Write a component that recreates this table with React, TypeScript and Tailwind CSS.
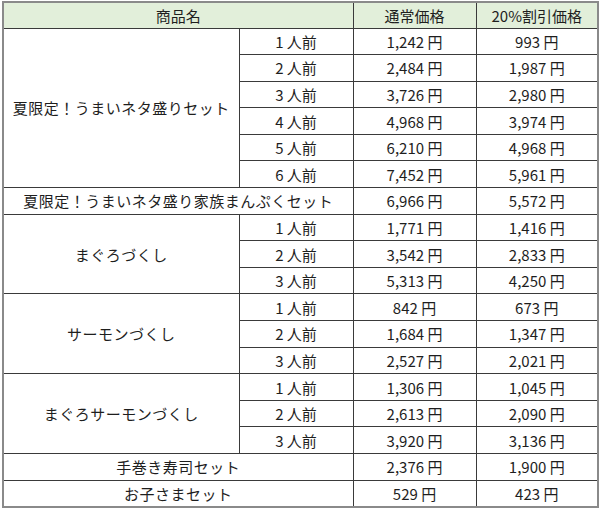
import React from 'react';

interface Row {
  name?: string;
  span?: number;
  size?: string;
  regular: string;
  discount: string;
}

const rows: Row[] = [
  { name: '夏限定！うまいネタ盛りセット', span: 6, size: '1 人前', regular: '1,242', discount: '993' },
  { size: '2 人前', regular: '2,484', discount: '1,987' },
  { size: '3 人前', regular: '3,726', discount: '2,980' },
  { size: '4 人前', regular: '4,968', discount: '3,974' },
  { size: '5 人前', regular: '6,210', discount: '4,968' },
  { size: '6 人前', regular: '7,452', discount: '5,961' },
  { name: '夏限定！うまいネタ盛り家族まんぷくセット', regular: '6,966', discount: '5,572' },
  { name: 'まぐろづくし', span: 3, size: '1 人前', regular: '1,771', discount: '1,416' },
  { size: '2 人前', regular: '3,542', discount: '2,833' },
  { size: '3 人前', regular: '5,313', discount: '4,250' },
  { name: 'サーモンづくし', span: 3, size: '1 人前', regular: '842', discount: '673' },
  { size: '2 人前', regular: '1,684', discount: '1,347' },
  { size: '3 人前', regular: '2,527', discount: '2,021' },
  { name: 'まぐろサーモンづくし', span: 3, size: '1 人前', regular: '1,306', discount: '1,045' },
  { size: '2 人前', regular: '2,613', discount: '2,090' },
  { size: '3 人前', regular: '3,920', discount: '3,136' },
  { name: '手巻き寿司セット', regular: '2,376', discount: '1,900' },
  { name: 'お子さまセット', regular: '529', discount: '423' },
];

const cell = 'border border-[#3a3a3a] text-center align-middle p-0';

export default function App() {
  return (
    <div
      className="bg-white w-[600px] h-[513px] pl-[2px] pt-[1px] text-[#1e1e1e] text-[15px] leading-none"
      style={{ fontFamily: '"Noto Sans CJK JP", "Noto Sans", sans-serif' }}
    >
      <table className="w-[595px] table-fixed border-collapse border-2 border-[#8a8a8a]">
        <colgroup>
          <col className="w-[236px]" />
          <col className="w-[114px]" />
          <col className="w-[123px]" />
          <col className="w-[122px]" />
        </colgroup>
        <thead>
          <tr className="h-[26px] bg-[#e2efda]">
            <th colSpan={2} className={`${cell} font-normal`}>商品名</th>
            <th className={`${cell} font-normal`}>通常価格</th>
            <th className={`${cell} font-normal`}>20%割引価格</th>
          </tr>
        </thead>
        <tbody>
          {rows.map((r, i) => (
            <tr key={i} className="h-[26.6px]">
              {r.name && !r.size && (
                <td colSpan={2} className={`${cell} tracking-[0.5px]`}>{r.name}</td>
              )}
              {r.name && r.size && (
                <td rowSpan={r.span} className={`${cell} tracking-[0.5px]`}>{r.name}</td>
              )}
              {r.size && <td className={cell}>{r.size}</td>}
              <td className={cell}>{r.regular} 円</td>
              <td className={cell}>{r.discount} 円</td>
            </tr>
          ))}
        </tbody>
      </table>
    </div>
  );
}
